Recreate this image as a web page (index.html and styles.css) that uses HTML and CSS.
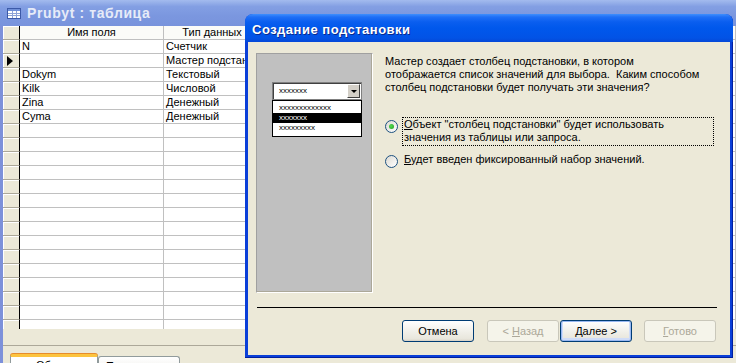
FILE: index.html
```html
<!DOCTYPE html>
<html lang="ru">
<head>
  <meta charset="UTF-8">
  <meta name="viewport" content="width=device-width, initial-scale=1.0">
  <title>Prubyt : таблица</title>
  <link rel="stylesheet" href="styles.css">
</head>
<body>

  <!-- Окно таблицы (конструктор) -->
  <div class="tbl-window">
    <div class="tbl-title">
      <svg class="tbl-icon" width="14" height="11" viewBox="0 0 14 11">
        <rect x="0.5" y="0.5" width="13" height="10" fill="#fff" stroke="#3c5aa8"/>
        <rect x="1" y="1" width="12" height="2" fill="#6f8fd8"/>
        <path d="M1 5.5h12M1 7.5h12M5.5 3v7M9.5 3v7" stroke="#8ea3d6" stroke-width="1"/>
      </svg>
      <span>Prubyt : таблица</span>
    </div>

    <div class="tbl-body">
      <div class="grid">
        <div class="row head">
          <div class="cell sel"></div>
          <div class="cell center">Имя поля</div>
          <div class="cell center">Тип данных</div>
          <div class="cell center">Описание</div>
        </div>
        <div class="row"><div class="cell sel"></div><div class="cell">N</div><div class="cell">Счетчик</div><div class="cell"></div></div>
        <div class="row"><div class="cell sel"><span class="pointer"></span></div><div class="cell"></div><div class="cell spill">Мастер подстановок</div><div class="cell"></div></div>
        <div class="row"><div class="cell sel"></div><div class="cell">Dokym</div><div class="cell">Текстовый</div><div class="cell"></div></div>
        <div class="row"><div class="cell sel"></div><div class="cell">Kilk</div><div class="cell">Числовой</div><div class="cell"></div></div>
        <div class="row"><div class="cell sel"></div><div class="cell">Zina</div><div class="cell">Денежный</div><div class="cell"></div></div>
        <div class="row"><div class="cell sel"></div><div class="cell">Cyma</div><div class="cell">Денежный</div><div class="cell"></div></div>
        <div class="row"><div class="cell sel"></div><div class="cell"></div><div class="cell"></div><div class="cell"></div></div>
        <div class="row"><div class="cell sel"></div><div class="cell"></div><div class="cell"></div><div class="cell"></div></div>
        <div class="row"><div class="cell sel"></div><div class="cell"></div><div class="cell"></div><div class="cell"></div></div>
        <div class="row"><div class="cell sel"></div><div class="cell"></div><div class="cell"></div><div class="cell"></div></div>
        <div class="row"><div class="cell sel"></div><div class="cell"></div><div class="cell"></div><div class="cell"></div></div>
        <div class="row"><div class="cell sel"></div><div class="cell"></div><div class="cell"></div><div class="cell"></div></div>
        <div class="row"><div class="cell sel"></div><div class="cell"></div><div class="cell"></div><div class="cell"></div></div>
        <div class="row"><div class="cell sel"></div><div class="cell"></div><div class="cell"></div><div class="cell"></div></div>
        <div class="row"><div class="cell sel"></div><div class="cell"></div><div class="cell"></div><div class="cell"></div></div>
        <div class="row"><div class="cell sel"></div><div class="cell"></div><div class="cell"></div><div class="cell"></div></div>
        <div class="row"><div class="cell sel"></div><div class="cell"></div><div class="cell"></div><div class="cell"></div></div>
        <div class="row"><div class="cell sel"></div><div class="cell"></div><div class="cell"></div><div class="cell"></div></div>
        <div class="row"><div class="cell sel"></div><div class="cell"></div><div class="cell"></div><div class="cell"></div></div>
        <div class="row"><div class="cell sel"></div><div class="cell"></div><div class="cell"></div><div class="cell"></div></div>
        <div class="row"><div class="cell sel"></div><div class="cell"></div><div class="cell"></div><div class="cell"></div></div>
      </div>

      <!-- Свойства поля -->
      <div class="props">
        <div class="props-line"></div>
        <div class="tabs">
          <div class="tab active">Общие</div>
          <div class="tab">Подстановка</div>
        </div>
      </div>
    </div>
  </div>

  <!-- Диалог мастера подстановок -->
  <div class="wizard">
    <div class="wiz-title">Создание подстановки</div>
    <div class="wiz-body">
      <div class="wiz-main">
        <div class="preview">
          <div class="combo">
            <span>xxxxxxx</span>
            <div class="combo-btn"><span class="arrow"></span></div>
          </div>
          <div class="combo-list">
            <div class="item">xxxxxxxxxxxxx</div>
            <div class="item hl">xxxxxxx</div>
            <div class="item">xxxxxxxxx</div>
          </div>
        </div>

        <div class="wiz-text">
          <p>Мастер создает столбец подстановки, в котором<br>отображается список значений для выбора.&nbsp; Каким способом<br>столбец подстановки будет получать эти значения?</p>

          <div class="opt">
            <span class="radio on"></span>
            <span class="opt-text focus"><u>О</u>бъект "столбец подстановки" будет использовать<br>значения из таблицы или запроса.</span>
          </div>
          <div class="opt">
            <span class="radio"></span>
            <span class="opt-text"><u>Б</u>удет введен фиксированный набор значений.</span>
          </div>
        </div>
      </div>

      <div class="wiz-sep"></div>

      <div class="wiz-buttons">
        <button class="btn">Отмена</button>
        <button class="btn btn-back" disabled>&lt; <u>Н</u>азад</button>
        <button class="btn btn-next default"><u>Д</u>алее &gt;</button>
        <button class="btn btn-finish" disabled><u>Г</u>отово</button>
      </div>
    </div>
  </div>

</body>
</html>
```

FILE: styles.css
```css
body {
  margin: 0;
  width: 736px;
  height: 363px;
  overflow: hidden;
  position: relative;
  background-color: #ece9d8;
  font-family: 'Liberation Sans', Arial, sans-serif;
  font-size: 11px;
  color: #000;
}

/* Окно таблицы */
.tbl-window {
  display: flex;
  flex-direction: column;
  height: 363px;
}

.tbl-title {
  flex-shrink: 0;
  height: 26px;
  display: flex;
  align-items: center;
  gap: 6px;
  padding-left: 7px;
  background: linear-gradient(#a3bbee, #839fe3 25%, #7b97df 60%, #7893dc);
  color: #e6ebf8;
  font-size: 14px;
  font-weight: bold;
  letter-spacing: 0.6px;
}

.tbl-icon {
  display: block;
}

.tbl-body {
  flex: 1;
  min-height: 0;
  border-left: 3px solid #7d91da;
  display: flex;
  flex-direction: column;
}

/* Сетка полей */
.grid {
  flex-shrink: 0;
  height: 303px;
  overflow: hidden;
  background-color: #fff;
}

.row {
  display: grid;
  grid-template-columns: 17px 144px 97px 1fr;
  height: 14px;
}

.cell {
  box-sizing: border-box;
  border-right: 1px solid #c0c0c0;
  border-bottom: 1px solid #c0c0c0;
  padding: 0 2px;
  line-height: 13px;
  white-space: nowrap;
  overflow: hidden;
}

.cell.spill {
  overflow: visible;
}

.cell.center {
  text-align: center;
}

.head .cell {
  background-color: #fbfbf8;
}

.cell.sel {
  background-color: #ece9d8;
  border-right: 1px solid #000;
  border-bottom: 1px solid #aca899;
  box-shadow: inset 1px 1px #fff;
  display: flex;
  align-items: center;
  padding-left: 4px;
}

.pointer {
  width: 0;
  height: 0;
  border-left: 6px solid #000;
  border-top: 5px solid transparent;
  border-bottom: 5px solid transparent;
}

/* Свойства поля */
.props {
  flex: 1;
  min-height: 0;
  overflow: hidden;
}

.props-line {
  height: 16px;
  border-bottom: 1px solid #aca899;
}

.tabs {
  display: flex;
  padding-left: 7px;
  margin-top: 8px;
}

.tab {
  box-sizing: border-box;
  width: 82px;
  height: 20px;
  margin-top: 2px;
  border: 1px solid #919b9c;
  border-bottom: none;
  border-radius: 3px 3px 0 0;
  background: linear-gradient(#fff, #ecebe6);
  text-align: center;
  padding-top: 3px;
}

.tab.active {
  width: 88px;
  margin-top: 0;
  background: #fff;
  border-top: 3px solid #fcc43f;
  box-shadow: 0 -1px 0 #e68b2c;
  padding-top: 2px;
}

/* Диалог мастера */
.wizard {
  position: absolute;
  left: 245px;
  top: 14px;
  width: 488px;
  height: 344px;
  display: flex;
  flex-direction: column;
  background-color: #0a3fd8;
  border-radius: 8px 8px 0 0;
  box-shadow: inset -1px -1px 0 #001ea0;
}

.wiz-title {
  height: 28px;
  box-sizing: border-box;
  padding: 8px 0 0 7px;
  border-radius: 8px 8px 0 0;
  background: linear-gradient(#3f8ffd 0, #1f6ff6 3px, #0a5eef 8px, #0058ec 50%, #0253e6 85%, #0448d8);
  color: #fff;
  font-size: 13px;
  font-weight: bold;
  letter-spacing: 0.5px;
  text-shadow: 1px 1px #0b2a8c;
}

.wiz-body {
  flex: 1;
  margin: 0 3px 3px;
  background-color: #ece9d8;
}

.wiz-main {
  display: flex;
  gap: 12px;
  height: 240px;
  margin: 11px 0 0 8px;
}

/* Картинка-пример со списком */
.preview {
  box-sizing: border-box;
  width: 117px;
  height: 240px;
  background-color: #c0c0c0;
  border: 1px solid;
  border-color: #a0a0a0 #fff #fff #a0a0a0;
  box-shadow: inset -1px -1px 0 #aca899;
  padding: 28px 0 0 15px;
}

.combo {
  box-sizing: border-box;
  width: 90px;
  height: 18px;
  background-color: #fff;
  border: 1px solid #808080;
  box-shadow: inset 1px 1px 0 #404040;
  display: flex;
  align-items: center;
  justify-content: space-between;
  padding: 0 1px 0 6px;
  font-size: 8px;
  line-height: 8px;
}

.combo-btn {
  box-sizing: border-box;
  width: 13px;
  height: 14px;
  background-color: #d4d0c8;
  border: 1px solid;
  border-color: #fff #404040 #404040 #fff;
  display: flex;
  align-items: center;
  justify-content: center;
}

.arrow {
  width: 0;
  height: 0;
  border-top: 3px solid #000;
  border-left: 3px solid transparent;
  border-right: 3px solid transparent;
}

.combo-list {
  box-sizing: border-box;
  width: 90px;
  background-color: #fff;
  border: 1px solid #000;
  padding: 2px 0 3px;
  font-size: 8px;
}

.combo-list .item {
  height: 10px;
  line-height: 10px;
  padding-left: 6px;
}

.combo-list .item.hl {
  background-color: #000;
  color: #fff;
}

/* Текст и варианты */
.wiz-text {
  width: 332px;
  padding-top: 2px;
}

.wiz-text p {
  margin: 0 0 23px;
  line-height: 13px;
}

.opt {
  display: flex;
  align-items: flex-start;
  gap: 4px;
  margin-bottom: 6px;
}

.radio {
  box-sizing: border-box;
  width: 13px;
  height: 13px;
  margin-top: 3px;
  border: 1px solid #1c5180;
  border-radius: 50%;
  background: linear-gradient(135deg, #dcdad2, #fff);
  display: flex;
  align-items: center;
  justify-content: center;
}

.radio.on::after {
  content: '';
  width: 5px;
  height: 5px;
  border-radius: 50%;
  background: radial-gradient(circle at 40% 40%, #55d951, #21a121);
}

.opt-text {
  border: 1px dotted transparent;
  padding: 0 0 1px 1px;
  line-height: 13px;
  width: 309px;
}

.opt-text.focus {
  border-color: #000;
}

.wiz-sep {
  height: 1px;
  width: 460px;
  margin: 14px 0 0 9px;
  background-color: #000;
}

/* Кнопки */
.wiz-buttons {
  display: flex;
  justify-content: flex-end;
  padding-right: 14px;
  margin-top: 12px;
}

.btn {
  box-sizing: border-box;
  width: 72px;
  height: 22px;
  padding: 0;
  border: 1px solid #003c74;
  border-radius: 3px;
  background: linear-gradient(#fff, #f4f3ee 40%, #e8e6dc 90%, #d6d0c5);
  font-family: 'Liberation Sans', Arial, sans-serif;
  font-size: 11px;
  color: #000;
}

.btn:disabled {
  border-color: #c9c7ba;
  background: #f5f4ea;
  color: #aca899;
}

.btn.default {
  box-shadow: inset 0 0 0 1px #98b8f2, inset 0 -1px 0 2px #cfdcf8;
}

.btn-back {
  margin-left: 13px;
}

.btn-next {
  margin-left: 1px;
}

.btn-finish {
  margin-left: 12px;
}
```
